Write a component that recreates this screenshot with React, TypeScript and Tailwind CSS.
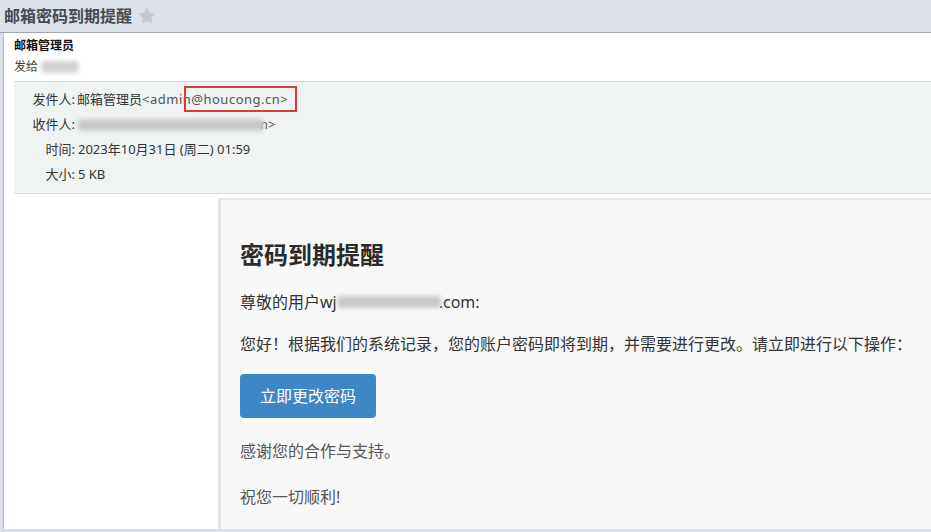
import { Star } from "lucide-react";

const FONT = "font-['Noto_Sans','Noto_Sans_CJK_SC',sans-serif]";

function Blur({ w, className = "" }: { w: number; className?: string }) {
  return (
    <span
      className={`inline-block align-middle h-[12px] rounded-sm bg-[#c9c9c9] blur-[2px] ${className}`}
      style={{ width: w }}
    />
  );
}

const META = [
  { label: "时间:", value: "2023年10月31日 (周二) 01:59" },
  { label: "大小:", value: "5 KB" },
];

export default function App() {
  return (
    <div
      className={`w-[931px] h-[532px] overflow-hidden flex flex-col bg-[#dce1e9] text-[#333] ${FONT}`}
    >
      {/* Title bar */}
      <div className="h-[33px] shrink-0 flex items-center pl-[4px] gap-[6px] border-b border-[#a3a6ab]">
        <h1 className="text-[16px] font-bold text-[#454a50] leading-none">
          邮箱密码到期提醒
        </h1>
        <Star className="w-[18px] h-[18px] text-[#c6c9ce] fill-[#c6c9ce]" strokeWidth={1} />
      </div>

      {/* Mail body */}
      <div className="flex-1 flex flex-col ml-[3px] mb-[3px] border-l border-[#b3bac6] bg-white min-h-0">
        <div className="px-[10px] pt-[2px] pb-[4px] text-[12px] leading-[21px]">
          <div className="font-bold text-[#111]">邮箱管理员</div>
          <div className="text-[#444] flex items-center">
            发给 <Blur w={38} className="ml-[3px] bg-[#d2d2d2] h-[11px]" />
          </div>
        </div>

        <div className="ml-[10px] border-t border-[#cdd6d5] border-b border-b-[#d6d9d9] bg-[#eff3f2] pt-[5px] pb-[6px] text-[13px] leading-[25px] text-[#333]">
          <div className="flex">
            <span className="w-[61px] text-right">发件人:</span>
            <span className="ml-[2px]">
              邮箱管理员
              <span className="text-[#555] tracking-[0.5px]">
                &lt;admi
                <span className="relative">
                  n@houcong.cn&gt;
                  <span className="absolute left-[1px] -right-[9px] -top-[4px] -bottom-[4px] border-2 border-[#df3a3a]" />
                </span>
              </span>
            </span>
          </div>
          <div className="flex">
            <span className="w-[61px] text-right">收件人:</span>
            <span className="ml-[3px] flex items-center text-[#555]">
              <Blur w={186} className="bg-[#c4c4c4]" />
              <span className="-ml-[4px]">n&gt;</span>
            </span>
          </div>
          {META.map((m) => (
            <div key={m.label} className="flex">
              <span className="w-[61px] text-right">{m.label}</span>
              <span className="ml-[3px]">{m.value}</span>
            </div>
          ))}
        </div>

        <div className="flex-1 flex min-h-0 pt-[4px] pl-[214px]">
          <div className="flex-1 border-l-[3px] border-t-2 border-[#e6e6e6] bg-[#f8f8f8] pl-[19px] pt-[38px] text-[16px] text-[#333]">
            <h2 className="text-[24px] font-bold leading-[34px] text-[#2b2b2b]">密码到期提醒</h2>
            <p className="mt-[18px] leading-[24px] flex items-center">
              尊敬的用户wj
              <Blur w={104} className="bg-[#c2c2c2]" />
              <span className="-ml-[2px]">.com:</span>
            </p>
            <p className="mt-[18px] leading-[24px] whitespace-nowrap">
              您好！根据我们的系统记录，您的账户密码即将到期，并需要进行更改。请立即进行以下操作：
            </p>
            <button className="mt-[18px] h-[44px] w-[136px] rounded-[4px] bg-[#3d87c6] text-white text-[16px]">
              立即更改密码
            </button>
            <p className="mt-[21px] leading-[24px] text-[#555]">感谢您的合作与支持。</p>
            <p className="mt-[22px] leading-[24px] text-[#555]">祝您一切顺利!</p>
          </div>
        </div>
      </div>
    </div>
  );
}
